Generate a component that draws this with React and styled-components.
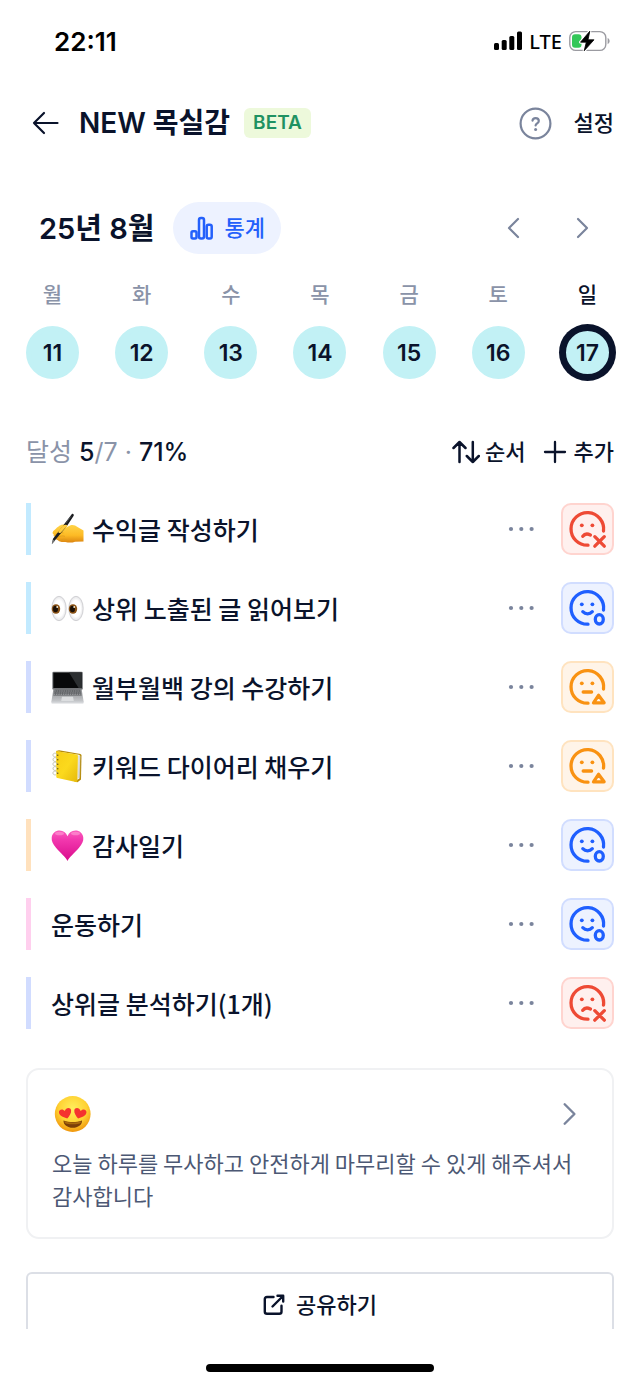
import { useState } from "react";
import styled, { createGlobalStyle } from "styled-components";

const GlobalStyle = createGlobalStyle`
  :root {
    --text-black: #0a132b;
    --text-gray: #8a93a8;
    --icon-gray: #7a849c;
    --blue: #2360fb;
    --korean: "Noto Sans CJK KR", sans-serif;
    --mixed: Inter, "Noto Sans CJK KR", sans-serif;
  }
  * {
    box-sizing: border-box;
  }
  body {
    margin: 0;
    background-color: white;
    color: var(--text-black);
    font-family: var(--mixed);
  }
  button {
    padding: 0;
    border: none;
    background: none;
    color: inherit;
    font-family: inherit;
    cursor: pointer;
  }
  svg {
    display: block;
    flex-shrink: 0;
  }
`;

const Wrapper = styled.div`
  display: flex;
  flex-direction: column;
  padding: 0 26px;
`;

const StatusBar = styled.div`
  display: flex;
  justify-content: space-between;
  align-items: center;
  height: 82px;
  padding: 0 4px 0 28px;
  color: black;
`;

const Clock = styled.div`
  font-size: 26px;
  font-weight: 600;
`;

const StatusIcons = styled.div`
  display: flex;
  align-items: center;
  gap: 7px;
  font-family: "Noto Sans", sans-serif;
  font-size: 20px;
  font-weight: 500;
`;

const Header = styled.header`
  display: flex;
  align-items: center;
  height: 82px;
`;

const BackBtn = styled.button`
  padding: 0 20px 0 6px;
`;

const Title = styled.h1`
  margin: 0;
  font-size: 28px;
  line-height: 40px;
  font-weight: 600;
`;

const Badge = styled.span`
  margin-left: 14px;
  padding: 0 9px;
  border-radius: 6px;
  background-color: #edf9db;
  color: #1f9262;
  font-size: 19px;
  line-height: 30px;
  font-weight: 600;
`;

const HeaderRight = styled.div`
  display: flex;
  align-items: center;
  gap: 22px;
  margin-left: auto;
`;

const TextBtn = styled.button`
  display: flex;
  align-items: center;
  gap: 5px;
  font-size: 22px;
  line-height: 32px;
  font-weight: 500;
`;

const MonthRow = styled.div`
  display: flex;
  align-items: center;
  margin-top: 38px;
  padding: 0 20px 0 13px;
`;

const Month = styled.h2`
  margin: 0;
  padding-top: 2px;
  font-size: 29px;
  line-height: 40px;
  font-weight: 600;
`;

const StatBtn = styled.button`
  display: flex;
  align-items: center;
  gap: 10px;
  height: 52px;
  margin-left: 18px;
  padding: 0 16px;
  border-radius: 26px;
  background-color: #edf2ff;
  color: var(--blue);
  font-size: 22px;
  line-height: 32px;
  font-weight: 500;
`;

const Arrows = styled.div`
  display: flex;
  gap: 44px;
  margin-left: auto;
`;

const Week = styled.div`
  display: flex;
  justify-content: space-between;
  margin-top: 22px;
`;

const Day = styled.button`
  display: flex;
  flex-direction: column;
  align-items: center;
  gap: 16px;
  width: 53px;
`;

const DayName = styled.span`
  color: ${(props) => (props.$on ? "var(--text-black)" : "var(--text-gray)")};
  font-family: var(--korean);
  font-size: 21px;
  line-height: 34px;
  font-weight: 500;
`;

const DayNum = styled.span`
  display: flex;
  justify-content: center;
  align-items: center;
  width: 53px;
  height: 53px;
  border: 5px solid ${(props) => (props.$on ? "var(--text-black)" : "#c2f1f5")};
  border-radius: 50%;
  box-shadow: ${(props) => (props.$on ? "0 0 0 2px var(--text-black)" : "none")};
  background-color: #c2f1f5;
  font-size: 23px;
  font-weight: 600;
`;

const Summary = styled.div`
  display: flex;
  justify-content: space-between;
  align-items: center;
  margin-top: 53px;
`;

const Rate = styled.div`
  color: var(--text-gray);
  font-size: 25px;
  line-height: 40px;
  b {
    color: var(--text-black);
    font-weight: 500;
  }
`;

const SummaryBtns = styled.div`
  display: flex;
  gap: 17px;
`;

const TaskList = styled.ul`
  display: flex;
  flex-direction: column;
  gap: 27px;
  margin: 31px 0 0;
  padding: 0;
  list-style: none;
`;

const Task = styled.li`
  display: flex;
  align-items: center;
  height: 52px;
  padding-left: 20px;
  border-left: 5px solid ${(props) => props.$color};
`;

const TaskName = styled.span`
  display: flex;
  align-items: center;
  gap: 8px;
  font-family: var(--korean);
  font-size: 25px;
  line-height: 36px;
  font-weight: 500;
`;

const MoreBtn = styled.button`
  margin-left: auto;
`;

const moods = {
  bad: { color: "#ee4a35", bg: "#fff0ee", border: "#ffd4cf", label: "미달성" },
  good: { color: "#1f5fff", bg: "#edf2ff", border: "#d1ddff", label: "달성" },
  soso: { color: "#f99212", bg: "#fff4e8", border: "#ffe3bf", label: "부분 달성" },
};

const MoodBtn = styled.button`
  display: flex;
  justify-content: center;
  align-items: center;
  width: 53px;
  height: 52px;
  margin-left: 26px;
  border: 2px solid ${(props) => moods[props.$mood].border};
  border-radius: 10px;
  background-color: ${(props) => moods[props.$mood].bg};
  color: ${(props) => moods[props.$mood].color};
`;

const Diary = styled.button`
  display: flex;
  flex-direction: column;
  gap: 13px;
  margin-top: 39px;
  padding: 25px 24px;
  border: 2px solid #f0f1f3;
  border-radius: 13px;
  text-align: left;
`;

const DiaryTop = styled.span`
  display: flex;
  justify-content: space-between;
  align-items: center;
  width: 100%;
  padding-right: 6px;
`;

const DiaryTxt = styled.span`
  color: #4c5874;
  font-family: var(--korean);
  font-size: 22px;
  line-height: 33px;
  font-weight: 400;
  word-break: keep-all;
`;

const ShareBtn = styled.button`
  display: flex;
  justify-content: center;
  align-items: center;
  gap: 11px;
  height: 57px;
  margin-top: 33px;
  padding-top: 6px;
  border: 2px solid #dcdfe6;
  border-bottom: none;
  border-radius: 6px 6px 0 0;
  font-size: 22px;
  line-height: 32px;
  font-weight: 500;
`;

const HomeBar = styled.div`
  align-self: center;
  width: 228px;
  height: 8px;
  margin: 35px 0 13px;
  border-radius: 4px;
  background-color: black;
`;

const Chevron = ({ left, size }) => (
  <svg width={size} height={size} viewBox="0 0 24 24" fill="none" stroke="var(--icon-gray)" strokeWidth="2.200" strokeLinecap="round" strokeLinejoin="round">
    <path d={left ? "M16 3l-9 9 9 9" : "M8 3l9 9-9 9"} />
  </svg>
);

const SignalIcon = () => (
  <svg width="28" height="20" viewBox="0 0 28 20">
    <rect x="0" y="12" width="5" height="7" rx="1.5" />
    <rect x="7.7" y="9" width="5" height="10" rx="1.5" />
    <rect x="15.3" y="5" width="5" height="14" rx="1.5" />
    <rect x="23" y="0.5" width="5" height="18.5" rx="1.5" />
  </svg>
);

const BatteryIcon = () => (
  <svg width="41" height="22" viewBox="0 0 41 22">
    <rect x="0.8" y="1.6" width="36" height="18.8" rx="6" fill="none" stroke="#9b9ba1" strokeWidth="1.4" />
    <path d="M38.6 8v6.2c2.7-1 2.7-5.2 0-6.2z" fill="#9b9ba1" />
    <rect x="3" y="4.3" width="9.5" height="13.4" rx="3" fill="#34c759" />
    <path d="M20.8 1.200L11.5 12.200h5.8L15.200 20.800l9.800-11h-6z" fill="black" stroke="white" strokeWidth="3" strokeLinejoin="round" />
    <path d="M20.8 1.200L11.500 12.200h5.800L15.200 20.800l9.800-11h-6z" fill="black" stroke="black" strokeWidth="0.800" strokeLinejoin="round" />
  </svg>
);

const MoodIcon = ({ mood }) => (
  <svg width="49" height="48" viewBox="2 2 49 48" fill="none" stroke="currentColor" strokeWidth="3.300" strokeLinecap="round" strokeLinejoin="round">
    <path d="M42.500 28A16.300 16.300 0 1 0 27 42.200" />
    <circle cx="20.800" cy="22.300" r="1.900" fill="currentColor" stroke="none" />
    <circle cx="31.400" cy="22.300" r="1.900" fill="currentColor" stroke="none" />
    {mood === "bad" && <path d="M21.800 33.300C23.400 31.100 26.500 30.600 29.400 32M33.800 33.700l9.500 9.500M43.300 33.700l-9.500 9.500" />}
    {mood === "good" && (
      <>
        <path d="M21.800 29.700c2.700 2.800 6.900 2.800 9.500 0" />
        <ellipse cx="38.300" cy="37.300" rx="4" ry="4.700" />
      </>
    )}
    {mood === "soso" && <path d="M22.200 31h8.400M37.500 34.300L32.500 41.800h10.600z" />}
  </svg>
);

const HandEmoji = () => (
  <svg width="33" height="33" viewBox="0 0 33 33" role="img" aria-label="글쓰는 손">
    <defs>
      <linearGradient id="hand" x1="0" y1="0" x2="0" y2="1">
        <stop offset="0" stopColor="#ffd54a" />
        <stop offset="0.6" stopColor="#fdbb25" />
        <stop offset="1" stopColor="#dc8510" />
      </linearGradient>
    </defs>
    <path d="M2 18.500C4 16.500 8 12.500 10.500 11.800c2-.5 4.500-.8 5.500.2l-2.500 3.300 6-3c2.500-.8 5 0 7 1.700l6 3.500v11l-8.500.200c-3 1.200-7 1-9.500.2-3.500.3-7-.3-7.500-1.700-2-.3-3-1.800-2.500-3.200-2-.8-2.300-1.800-1.800-2.800-1.200-.5-1.500-1.500-.7-2.500z" fill="url(#hand)" />
    <path d="M4.700 21.200c3-1.500 5.300-2 7.300-1.400M6.500 24.200c2.500-1.200 5-1.700 7-1M9.500 27.200c2-1 4-1.300 6-.6M13.500 15.300c-2 1-3 2.200-4 3.600" fill="none" stroke="#e09a1a" strokeWidth="0.800" strokeLinecap="round" />
    <path d="M20.700 1.200c1-.9 2.500.2 2 1.500L16.300 12.500 4.500 26.800 1 31l1-5.200 11.500-15z" fill="#1c1e21" />
    <path d="M19.800 3.500l-5 6.500" stroke="#666b70" strokeWidth="0.700" />
    <path d="M1.900 26.500l1.900 1.300L.7 31.300z" fill="#777" />
    <path d="M11.500 12.700c1.800-1.300 4.300-1.300 4.900-.5.500.8-3.400 3.600-6.400 7.300-1.200 1.200-3.300.5-2.500-1.200z" fill="#ffcc3c" />
  </svg>
);

const EyesEmoji = () => (
  <svg width="33" height="33" viewBox="0 0 33 33" role="img" aria-label="눈">
    <defs>
      <radialGradient id="eye">
        <stop offset="0.650" stopColor="white" />
        <stop offset="1" stopColor="#e3e3e6" />
      </radialGradient>
    </defs>
    {[8, 25].map((x) => (
      <g key={x}>
        <ellipse cx={x} cy="16.500" rx="7.200" ry="12.200" fill="url(#eye)" stroke="#c9c9cd" strokeWidth="0.800" />
        <ellipse cx={x - 3} cy="17" rx="4.200" ry="4.800" fill="#8a5215" />
        <ellipse cx={x - 3.500} cy="17" rx="2.500" ry="3.200" fill="#1c1006" />
        <circle cx={x - 1.800} cy="15" r="0.900" fill="#fff4dc" />
      </g>
    ))}
  </svg>
);

const LaptopEmoji = () => (
  <svg width="33" height="33" viewBox="0 0 33 33" role="img" aria-label="노트북">
    <defs>
      <linearGradient id="base" x1="0" y1="0" x2="0" y2="1">
        <stop offset="0" stopColor="#85878a" />
        <stop offset="1" stopColor="#c9cbce" />
      </linearGradient>
    </defs>
    <rect x="1.300" y="0.800" width="30.500" height="18" rx="1.300" fill="#74777a" />
    <path d="M2.300 1.600h28.500v15.600H2.300z" fill="#08090a" />
    <path d="M18 1.600h12.800v15.600h-3z" fill="#2c2f31" />
    <path d="M2.500 17.500h28L32.700 31H.3z" fill="url(#base)" />
    <path d="M3.600 18.500h25.800l1.300 6H2.300z" fill="#5c5f62" />
    <path d="M3.300 20h26.400M2.800 22h27.500M2.600 23.500h28" stroke="#b5b7ba" strokeWidth="0.600" strokeDasharray="1.600 0.700" />
    <path d="M11 25.800h11l.8 4.200H10.200z" fill="#dcdee0" />
    <path d="M.2 30.800h32.600l-.5 1.700H.7z" fill="#d4d6d9" />
  </svg>
);

const NotebookEmoji = () => (
  <svg width="33" height="33" viewBox="0 0 33 33" role="img" aria-label="노트">
    <defs>
      <linearGradient id="note" x1="0" y1="0" x2="1" y2="1">
        <stop offset="0" stopColor="#f7ce15" />
        <stop offset="0.500" stopColor="#fbd91d" />
        <stop offset="1" stopColor="#e5b90b" />
      </linearGradient>
    </defs>
    <path d="M5 1l3-.8L29.500 4l1 1-.5 24.500-3.500 2.700-3-.7z" fill="#b78c08" />
    <path d="M7 1.500l21 3.200 1.200 1-.7 22.800-3 1.800z" fill="#f1f1ee" />
    <path d="M28 6l-.4 22M29 6l-.4 21.500" stroke="#b7b8b4" strokeWidth="0.500" />
    <path d="M5 2.200c0-.8.600-1.200 1.400-1l19 3.300c.9.200 1.500.8 1.500 1.700l-.5 24.800c0 .9-.6 1.300-1.500 1.100L6.500 28c-.8-.2-1.200-.8-1.200-1.600z" fill="url(#note)" />
    {[3.5, 8, 12.5, 17, 21.5].map((y) => (
      <g key={y}>
        <path d={`M6.500 ${y + 1.5}c-1.500-3-5-2-4.500.5.300 1.300 2 1.700 3 1.300`} fill="none" stroke="#bdbcaa" strokeWidth="0.900" />
        <circle cx="6.700" cy={y + 1.7} r="0.800" fill="#6a5713" />
      </g>
    ))}
  </svg>
);

const HeartEmoji = () => (
  <svg width="33" height="33" viewBox="0 0 33 33" role="img" aria-label="하트">
    <defs>
      <linearGradient id="heart" x1="0" y1="0" x2="0" y2="1">
        <stop offset="0" stopColor="#fb5cbc" />
        <stop offset="0.300" stopColor="#f238ae" />
        <stop offset="1" stopColor="#d90c8c" />
      </linearGradient>
    </defs>
    <path d="M16.500 32C14.800 28.200 9.500 24 5 18.700 1.800 15 .4 12 .7 8.700 1.100 4.300 4.500 1.600 8.600 1.600c3.800 0 6.400 2.200 7.900 5.600 1.500-3.400 4.100-5.600 7.900-5.600 4.100 0 7.500 2.700 7.900 7.100.3 3.300-1.100 6.300-4.300 10C23.500 24 18.200 28.200 16.500 32z" fill="url(#heart)" />
    <ellipse cx="8.500" cy="4.500" rx="4.500" ry="1.800" fill="#ffabdc" opacity="0.500" />
    <ellipse cx="24.500" cy="4.500" rx="4.500" ry="1.800" fill="#ffabdc" opacity="0.500" />
  </svg>
);

const LoveEmoji = () => (
  <svg width="40" height="38" viewBox="0 0 40 38" role="img" aria-label="하트 눈 얼굴">
    <defs>
      <radialGradient id="face" cx="0.500" cy="0.350" r="0.650">
        <stop offset="0" stopColor="#ffee5d" />
        <stop offset="0.600" stopColor="#ffd233" />
        <stop offset="1" stopColor="#f0960c" />
      </radialGradient>
    </defs>
    <circle cx="20.700" cy="19" r="17.900" fill="url(#face)" />
    <path d="M11.500 25.500c6 2.100 12.500 2.100 18.500 0 .3 4.300-4 7.300-9.200 7.300s-9.600-3-9.300-7.300z" fill="#7b3e08" />
    <path d="M12.200 26.200c5.700 1.700 11.400 1.700 17.100 0-.2 1.700-1 2.300-2.500 2.600-4 .7-8 .7-12 0-1.500-.3-2.300-.9-2.600-2.600z" fill="#a9680d" />
    <path d="M15.300 23.500c-3.500-1-7.600-2.700-8.300-5.500-.8-3.300 3.600-5 5.800-1.900 1-4 5.800-4.200 6.300-.8.400 2.900-1.800 6-3.800 8.200z" fill="#f5322f" />
    <path d="M26.100 23.500c3.500-1 7.600-2.700 8.300-5.500.8-3.300-3.600-5-5.800-1.900-1-4-5.800-4.200-6.300-.8-.4 2.900 1.800 6 3.800 8.200z" fill="#f5322f" />
  </svg>
);

const week = [
  { name: "월", num: 11 },
  { name: "화", num: 12 },
  { name: "수", num: 13 },
  { name: "목", num: 14 },
  { name: "금", num: 15 },
  { name: "토", num: 16 },
  { name: "일", num: 17 },
];

const tasks = [
  { name: "수익글 작성하기", Emoji: HandEmoji, color: "#c2eaff", mood: "bad" },
  { name: "상위 노출된 글 읽어보기", Emoji: EyesEmoji, color: "#c2eaff", mood: "good" },
  { name: "월부월백 강의 수강하기", Emoji: LaptopEmoji, color: "#d1dcff", mood: "soso" },
  { name: "키워드 다이어리 채우기", Emoji: NotebookEmoji, color: "#d1dcff", mood: "soso" },
  { name: "감사일기", Emoji: HeartEmoji, color: "#ffe1bd", mood: "good" },
  { name: "운동하기", color: "#ffcfee", mood: "good" },
  { name: "상위글 분석하기(1개)", color: "#d1dcff", mood: "bad" },
];

const App = () => {
  const [selected, setSelected] = useState(17);

  return (
    <>
      <GlobalStyle />
      <Wrapper>
        <StatusBar>
          <Clock>22:11</Clock>
          <StatusIcons>
            <SignalIcon />
            LTE
            <BatteryIcon />
          </StatusIcons>
        </StatusBar>

        <Header>
          <BackBtn aria-label="뒤로">
            <svg width="27" height="24" viewBox="0 0 27 24" fill="none" stroke="currentColor" strokeWidth="2.200" strokeLinecap="round" strokeLinejoin="round">
              <path d="M12 2L2 12l10 10M2 12h23.500" />
            </svg>
          </BackBtn>
          <Title>NEW 목실감</Title>
          <Badge>BETA</Badge>
          <HeaderRight>
            <button aria-label="도움말">
              <svg width="33" height="33" viewBox="0 0 33 33" fill="none" stroke="var(--icon-gray)" strokeWidth="2.200" strokeLinecap="round" strokeLinejoin="round">
                <circle cx="16.500" cy="16.500" r="14.900" />
                <path d="M13.500 13.700c.2-1.800 1.500-2.600 3.100-2.600 1.900 0 3.200 1.100 3.200 2.800 0 2.400-3.200 2.400-3.200 4.600" />
                <circle cx="16.600" cy="22.400" r="1.500" fill="var(--icon-gray)" stroke="none" />
              </svg>
            </button>
            <TextBtn>설정</TextBtn>
          </HeaderRight>
        </Header>

        <MonthRow>
          <Month>25년 8월</Month>
          <StatBtn>
            <svg width="26" height="24" viewBox="0 0 26 24" fill="none" stroke="currentColor" strokeWidth="2.500">
              <rect x="2.500" y="15.300" width="5" height="7.200" rx="1.500" />
              <rect x="10" y="2" width="5" height="20.500" rx="2" />
              <rect x="17.700" y="8.800" width="5" height="13.700" rx="1.800" />
            </svg>
            통계
          </StatBtn>
          <Arrows>
            <button aria-label="이전 주">
              <Chevron left size={24} />
            </button>
            <button aria-label="다음 주">
              <Chevron size={24} />
            </button>
          </Arrows>
        </MonthRow>

        <Week>
          {week.map((day) => (
            <Day key={day.num} onClick={() => setSelected(day.num)}>
              <DayName $on={day.num === selected}>{day.name}</DayName>
              <DayNum $on={day.num === selected}>{day.num}</DayNum>
            </Day>
          ))}
        </Week>

        <Summary>
          <Rate>
            달성 <b>5</b>/7 · <b>71%</b>
          </Rate>
          <SummaryBtns>
            <TextBtn>
              <svg width="28" height="24" viewBox="0 0 28 24" fill="none" stroke="currentColor" strokeWidth="2.500" strokeLinecap="round" strokeLinejoin="round">
                <path d="M1.500 8l6-6 6 6M7.500 2v20M14.800 16l6 6 6-6M20.800 22V2" />
              </svg>
              순서
            </TextBtn>
            <TextBtn>
              <svg width="26" height="24" viewBox="0 0 26 24" fill="none" stroke="currentColor" strokeWidth="2.300" strokeLinecap="round">
                <path d="M12 2v20M2 12h20" />
              </svg>
              추가
            </TextBtn>
          </SummaryBtns>
        </Summary>

        <TaskList>
          {tasks.map(({ name, Emoji, color, mood }) => (
            <Task key={name} $color={color}>
              <TaskName>
                {Emoji && <Emoji />}
                {name}
              </TaskName>
              <MoreBtn aria-label="더보기">
                <svg width="27" height="6" viewBox="0 0 27 6" fill="var(--icon-gray)">
                  <circle cx="3" cy="3" r="2.100" />
                  <circle cx="13.300" cy="3" r="2.100" />
                  <circle cx="23.600" cy="3" r="2.100" />
                </svg>
              </MoreBtn>
              <MoodBtn $mood={mood} aria-label={moods[mood].label}>
                <MoodIcon mood={mood} />
              </MoodBtn>
            </Task>
          ))}
        </TaskList>

        <Diary>
          <DiaryTop>
            <LoveEmoji />
            <Chevron size={26} />
          </DiaryTop>
          <DiaryTxt>
            오늘 하루를 무사하고 안전하게 마무리할 수 있게 해주셔서 감사합니다
          </DiaryTxt>
        </Diary>

        <ShareBtn>
          <svg width="22" height="22" viewBox="0 0 22 22" fill="none" stroke="currentColor" strokeWidth="2.400" strokeLinecap="round" strokeLinejoin="round">
            <path d="M10.500 3H4C2.500 3 1.800 3.700 1.800 5v12.700c0 1.300.7 2 2.200 2h12.300c1.500 0 2.200-.7 2.200-2v-6M9.500 12.500L19.500 2.500M14.500 1.800h5.700v5.700" />
          </svg>
          공유하기
        </ShareBtn>
        <HomeBar />
      </Wrapper>
    </>
  );
};

export default App;
